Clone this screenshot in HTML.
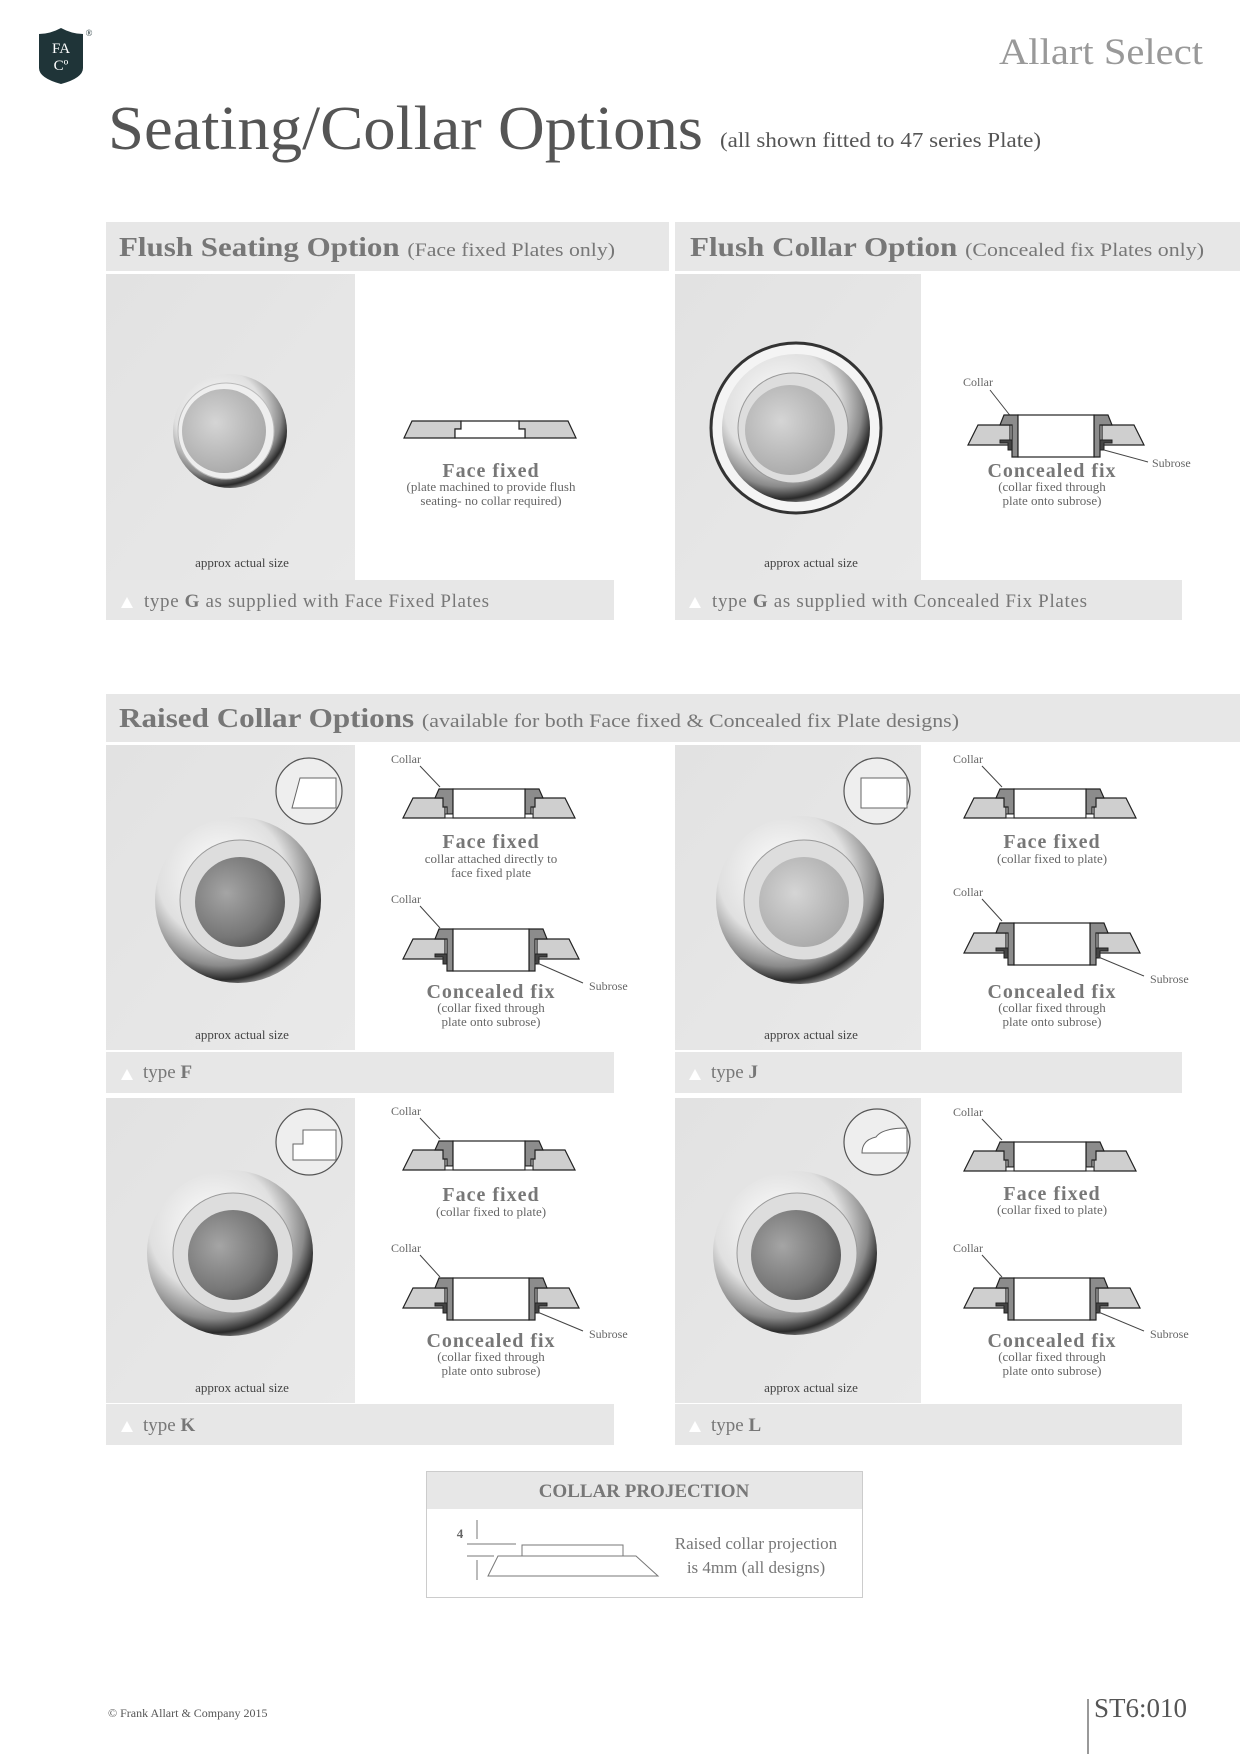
<!DOCTYPE html>
<html><head><meta charset="utf-8"><style>
html,body{margin:0;padding:0;background:#fff;}
svg{display:block;}
text{font-family:"Liberation Serif",serif;}
</style></head><body>
<svg width="1240" height="1754" viewBox="0 0 1240 1754" xmlns="http://www.w3.org/2000/svg">
<defs>
<radialGradient id="met" cx="40%" cy="35%" r="70%">
<stop offset="0" stop-color="#ffffff"/><stop offset="0.55" stop-color="#e0e0e0"/><stop offset="0.78" stop-color="#8a8a8a"/><stop offset="0.9" stop-color="#2a2a2a"/><stop offset="1" stop-color="#bbb"/>
</radialGradient>
<radialGradient id="ball" cx="35%" cy="40%" r="70%">
<stop offset="0" stop-color="#a5a5a5"/><stop offset="0.7" stop-color="#777"/><stop offset="1" stop-color="#555"/>
</radialGradient>
<radialGradient id="ballG" cx="40%" cy="40%" r="70%">
<stop offset="0" stop-color="#d5d5d5"/><stop offset="1" stop-color="#a5a5a5"/>
</radialGradient>
<linearGradient id="bg" x1="0" y1="0" x2="1" y2="1"><stop offset="0" stop-color="#e2e2e2"/><stop offset="1" stop-color="#e9e9e9"/></linearGradient>
<g id="ffL">
<polygon points="0,33 10,13 42,13 42,33" fill="#cfcfcf" stroke="#222" stroke-width="1.2"/>
<polygon points="32,13 36,4 50,4 50,29 44,29 44,22 40,22 40,13" fill="#8c8c8c" stroke="#222" stroke-width="1.2"/>
</g>
<g id="ff">
<use href="#ffL"/>
<use href="#ffL" transform="translate(172,0) scale(-1,1)"/>
<rect x="50" y="4" width="72" height="29" fill="#fff" stroke="#222" stroke-width="1.2"/>
<rect x="42" y="29" width="8" height="4" fill="#fff" stroke="#222" stroke-width="1"/>
<rect x="122" y="29" width="8" height="4" fill="#fff" stroke="#222" stroke-width="1"/>
</g>
<g id="cfL">
<polygon points="0,33 10,13 42,13 42,33" fill="#cfcfcf" stroke="#222" stroke-width="1.2"/>
<polygon points="32,13 36,3 50,3 50,45 44,45 44,13" fill="#8c8c8c" stroke="#222" stroke-width="1.2"/>
<polygon points="32,28 44,28 44,38 40,38 40,31 32,31" fill="#444" stroke="#222" stroke-width="1"/>
</g>
<g id="cf">
<use href="#cfL"/>
<use href="#cfL" transform="translate(176,0) scale(-1,1)"/>
<rect x="50" y="3" width="76" height="42" fill="#fff" stroke="#222" stroke-width="1.2"/>
</g>
<g id="flush">
<polygon points="0,22 8,5 57,5 57,13 51,13 51,22" fill="#cfcfcf" stroke="#222" stroke-width="1.2"/>
<polygon points="172,22 164,5 115,5 115,13 121,13 121,22" fill="#cfcfcf" stroke="#222" stroke-width="1.2"/>
<polygon points="57,5 115,5 115,13 121,13 121,22 51,22 51,13 57,13" fill="#fff" stroke="#222" stroke-width="1.2"/>
</g>
</defs>

<!-- logo -->
<path d="M39,34 Q50,34 61,28 Q72,34 83,34 L83,68 Q83,78 61,84 Q39,78 39,68 Z" fill="#1f3438"/>
<text x="61" y="53" font-size="15" fill="#fff" text-anchor="middle">FA</text>
<text x="61" y="70" font-size="15" fill="#fff" text-anchor="middle">Cº</text>
<text x="89" y="36" font-size="9" fill="#1f3438" text-anchor="middle">®</text>

<text x="999" y="64" font-size="37" fill="#999" textLength="204" lengthAdjust="spacingAndGlyphs">Allart Select</text>
<text x="108" y="149" font-size="62" fill="#555" textLength="595" lengthAdjust="spacingAndGlyphs">Seating/Collar Options</text>
<text x="720" y="147" font-size="21" fill="#555" textLength="321" lengthAdjust="spacingAndGlyphs">(all shown fitted to 47 series Plate)</text>

<!-- header bars -->
<rect x="106" y="222" width="563" height="49" fill="#e7e7e7"/>
<rect x="675" y="222" width="565" height="49" fill="#e7e7e7"/>
<text x="119" y="256" font-size="27" font-weight="bold" fill="#777" textLength="496" lengthAdjust="spacingAndGlyphs">Flush Seating Option <tspan font-size="19" font-weight="normal">(Face fixed Plates only)</tspan></text>
<text x="690" y="256" font-size="27" font-weight="bold" fill="#777" textLength="514" lengthAdjust="spacingAndGlyphs">Flush Collar Option <tspan font-size="19" font-weight="normal">(Concealed fix Plates only)</tspan></text>

<!-- row 1 left -->
<rect x="106" y="274" width="249" height="306" fill="url(#bg)"/>
<circle cx="230" cy="431" r="57" fill="url(#met)"/>
<circle cx="226" cy="431" r="48" fill="#eee" stroke="#bbb"/>
<circle cx="224" cy="431" r="42" fill="url(#ballG)"/>
<text x="242" y="567" font-size="13" fill="#444" text-anchor="middle">approx actual size</text>
<rect x="106" y="580" width="508" height="40" fill="#e7e7e7"/>
<polygon points="121,608 127,597 133,608" fill="#fff"/>
<text x="144" y="607" font-size="19" fill="#777" textLength="345" lengthAdjust="spacing">type <tspan font-weight="bold">G</tspan> as supplied with Face Fixed Plates</text>
<use href="#flush" x="404" y="416"/>
<text x="491" y="477" font-size="20" font-weight="bold" fill="#777" text-anchor="middle" letter-spacing="1">Face fixed</text>
<text x="491" y="491" font-size="13" fill="#666" text-anchor="middle">(plate machined to provide flush</text>
<text x="491" y="505" font-size="13" fill="#666" text-anchor="middle">seating- no collar required)</text>

<!-- row 1 right -->
<rect x="675" y="274" width="246" height="306" fill="url(#bg)"/>
<circle cx="796" cy="428" r="85" fill="#f4f4f4" stroke="#333" stroke-width="3"/>
<circle cx="796" cy="428" r="74" fill="url(#met)"/>
<circle cx="793" cy="428" r="55" fill="#ddd" stroke="#999"/>
<circle cx="790" cy="430" r="45" fill="url(#ballG)"/>
<text x="811" y="567" font-size="13" fill="#444" text-anchor="middle">approx actual size</text>
<rect x="675" y="580" width="507" height="40" fill="#e7e7e7"/>
<polygon points="689,608 695,597 701,608" fill="#fff"/>
<text x="712" y="607" font-size="19" fill="#777" textLength="375" lengthAdjust="spacing">type <tspan font-weight="bold">G</tspan> as supplied with Concealed Fix Plates</text>
<text x="963" y="386" font-size="12" fill="#666">Collar</text>
<line x1="990" y1="390" x2="1012" y2="418" stroke="#444"/>
<use href="#cf" x="968" y="412"/>
<text x="1152" y="467" font-size="12" fill="#666">Subrose</text>
<line x1="1104" y1="450" x2="1148" y2="462" stroke="#444"/>
<text x="1052" y="477" font-size="20" font-weight="bold" fill="#777" text-anchor="middle" letter-spacing="1">Concealed fix</text>
<text x="1052" y="491" font-size="13" fill="#666" text-anchor="middle">(collar fixed through</text>
<text x="1052" y="505" font-size="13" fill="#666" text-anchor="middle">plate onto subrose)</text>

<!-- raised header -->
<rect x="106" y="694" width="1134" height="48" fill="#e7e7e7"/>
<text x="119" y="727" font-size="27" font-weight="bold" fill="#777" textLength="840" lengthAdjust="spacingAndGlyphs">Raised Collar Options <tspan font-size="19" font-weight="normal">(available for both Face fixed &amp; Concealed fix Plate designs)</tspan></text>

<!-- F -->
<g>
<rect x="106" y="745" width="249" height="305" fill="url(#bg)"/>
<circle cx="309" cy="791" r="33" fill="#eee" stroke="#555" stroke-width="1.2"/>
<polygon points="292,808 300,778 336,778 336,808" fill="#fff" stroke="#666"/>
<circle cx="238" cy="900" r="83" fill="url(#met)"/>
<circle cx="240" cy="900" r="60" fill="#ddd" stroke="#999"/>
<circle cx="240" cy="902" r="45" fill="url(#ball)"/>
<text x="242" y="1039" font-size="13" fill="#444" text-anchor="middle">approx actual size</text>
<rect x="106" y="1052" width="508" height="41" fill="#e7e7e7"/>
<polygon points="121,1080 127,1069 133,1080" fill="#fff"/>
<text x="143" y="1078" font-size="19" fill="#777">type <tspan font-weight="bold">F</tspan></text>
</g>
<!-- J -->
<g>
<rect x="675" y="745" width="246" height="305" fill="url(#bg)"/>
<circle cx="877" cy="791" r="33" fill="#eee" stroke="#555" stroke-width="1.2"/>
<rect x="861" y="778" width="46" height="30" fill="#fff" stroke="#666"/>
<circle cx="800" cy="900" r="84" fill="url(#met)"/>
<circle cx="804" cy="900" r="60" fill="#ddd" stroke="#999"/>
<circle cx="804" cy="902" r="45" fill="url(#ballG)"/>
<text x="811" y="1039" font-size="13" fill="#444" text-anchor="middle">approx actual size</text>
<rect x="675" y="1052" width="507" height="41" fill="#e7e7e7"/>
<polygon points="689,1080 695,1069 701,1080" fill="#fff"/>
<text x="711" y="1078" font-size="19" fill="#777">type <tspan font-weight="bold">J</tspan></text>
</g>
<!-- K -->
<g>
<rect x="106" y="1098" width="249" height="305" fill="url(#bg)"/>
<circle cx="309" cy="1142" r="33" fill="#eee" stroke="#555" stroke-width="1.2"/>
<polygon points="293,1160 293,1144 303,1144 303,1130 336,1130 336,1160" fill="#fff" stroke="#666"/>
<circle cx="230" cy="1253" r="83" fill="url(#met)"/>
<circle cx="233" cy="1253" r="60" fill="#ddd" stroke="#999"/>
<circle cx="233" cy="1255" r="45" fill="url(#ball)"/>
<text x="242" y="1392" font-size="13" fill="#444" text-anchor="middle">approx actual size</text>
<rect x="106" y="1404" width="508" height="41" fill="#e7e7e7"/>
<polygon points="121,1432 127,1421 133,1432" fill="#fff"/>
<text x="143" y="1431" font-size="19" fill="#777">type <tspan font-weight="bold">K</tspan></text>
</g>
<!-- L -->
<g>
<rect x="675" y="1098" width="246" height="305" fill="url(#bg)"/>
<circle cx="877" cy="1142" r="33" fill="#eee" stroke="#555" stroke-width="1.2"/>
<path d="M862,1153 Q862,1140 876,1137 Q882,1128 907,1128 L907,1153 Z" fill="#fff" stroke="#666"/>
<circle cx="795" cy="1253" r="82" fill="url(#met)"/>
<circle cx="797" cy="1253" r="60" fill="#ddd" stroke="#999"/>
<circle cx="796" cy="1255" r="45" fill="url(#ball)"/>
<text x="811" y="1392" font-size="13" fill="#444" text-anchor="middle">approx actual size</text>
<rect x="675" y="1404" width="507" height="41" fill="#e7e7e7"/>
<polygon points="689,1432 695,1421 701,1432" fill="#fff"/>
<text x="711" y="1431" font-size="19" fill="#777">type <tspan font-weight="bold">L</tspan></text>
</g>

<!-- F diagrams -->
<text x="391" y="763" font-size="12" fill="#666">Collar</text>
<line x1="420" y1="766" x2="440" y2="787" stroke="#444"/>
<use href="#ff" x="403" y="785"/>
<text x="491" y="848" font-size="20" font-weight="bold" fill="#777" text-anchor="middle" letter-spacing="1">Face fixed</text>
<text x="491" y="863" font-size="13" fill="#666" text-anchor="middle">collar attached directly to</text>
<text x="491" y="877" font-size="13" fill="#666" text-anchor="middle">face fixed plate</text>
<text x="391" y="903" font-size="12" fill="#666">Collar</text>
<line x1="420" y1="906" x2="440" y2="928" stroke="#444"/>
<use href="#cf" x="403" y="926"/>
<line x1="535" y1="962" x2="583" y2="983" stroke="#444"/>
<text x="589" y="990" font-size="12" fill="#666">Subrose</text>
<text x="491" y="998" font-size="20" font-weight="bold" fill="#777" text-anchor="middle" letter-spacing="1">Concealed fix</text>
<text x="491" y="1012" font-size="13" fill="#666" text-anchor="middle">(collar fixed through</text>
<text x="491" y="1026" font-size="13" fill="#666" text-anchor="middle">plate onto subrose)</text>

<!-- J diagrams -->
<text x="953" y="763" font-size="12" fill="#666">Collar</text>
<line x1="982" y1="766" x2="1002" y2="787" stroke="#444"/>
<use href="#ff" x="964" y="785"/>
<text x="1052" y="848" font-size="20" font-weight="bold" fill="#777" text-anchor="middle" letter-spacing="1">Face fixed</text>
<text x="1052" y="863" font-size="13" fill="#666" text-anchor="middle">(collar fixed to plate)</text>
<text x="953" y="896" font-size="12" fill="#666">Collar</text>
<line x1="982" y1="899" x2="1002" y2="921" stroke="#444"/>
<use href="#cf" x="964" y="920"/>
<line x1="1096" y1="956" x2="1144" y2="976" stroke="#444"/>
<text x="1150" y="983" font-size="12" fill="#666">Subrose</text>
<text x="1052" y="998" font-size="20" font-weight="bold" fill="#777" text-anchor="middle" letter-spacing="1">Concealed fix</text>
<text x="1052" y="1012" font-size="13" fill="#666" text-anchor="middle">(collar fixed through</text>
<text x="1052" y="1026" font-size="13" fill="#666" text-anchor="middle">plate onto subrose)</text>

<!-- K diagrams -->
<text x="391" y="1115" font-size="12" fill="#666">Collar</text>
<line x1="420" y1="1118" x2="440" y2="1139" stroke="#444"/>
<use href="#ff" x="403" y="1137"/>
<text x="491" y="1201" font-size="20" font-weight="bold" fill="#777" text-anchor="middle" letter-spacing="1">Face fixed</text>
<text x="491" y="1216" font-size="13" fill="#666" text-anchor="middle">(collar fixed to plate)</text>
<text x="391" y="1252" font-size="12" fill="#666">Collar</text>
<line x1="420" y1="1255" x2="440" y2="1277" stroke="#444"/>
<use href="#cf" x="403" y="1275"/>
<line x1="535" y1="1311" x2="583" y2="1331" stroke="#444"/>
<text x="589" y="1338" font-size="12" fill="#666">Subrose</text>
<text x="491" y="1347" font-size="20" font-weight="bold" fill="#777" text-anchor="middle" letter-spacing="1">Concealed fix</text>
<text x="491" y="1361" font-size="13" fill="#666" text-anchor="middle">(collar fixed through</text>
<text x="491" y="1375" font-size="13" fill="#666" text-anchor="middle">plate onto subrose)</text>

<!-- L diagrams -->
<text x="953" y="1116" font-size="12" fill="#666">Collar</text>
<line x1="982" y1="1119" x2="1002" y2="1140" stroke="#444"/>
<use href="#ff" x="964" y="1138"/>
<text x="1052" y="1200" font-size="20" font-weight="bold" fill="#777" text-anchor="middle" letter-spacing="1">Face fixed</text>
<text x="1052" y="1214" font-size="13" fill="#666" text-anchor="middle">(collar fixed to plate)</text>
<text x="953" y="1252" font-size="12" fill="#666">Collar</text>
<line x1="982" y1="1255" x2="1002" y2="1277" stroke="#444"/>
<use href="#cf" x="964" y="1275"/>
<line x1="1096" y1="1311" x2="1144" y2="1331" stroke="#444"/>
<text x="1150" y="1338" font-size="12" fill="#666">Subrose</text>
<text x="1052" y="1347" font-size="20" font-weight="bold" fill="#777" text-anchor="middle" letter-spacing="1">Concealed fix</text>
<text x="1052" y="1361" font-size="13" fill="#666" text-anchor="middle">(collar fixed through</text>
<text x="1052" y="1375" font-size="13" fill="#666" text-anchor="middle">plate onto subrose)</text>

<!-- collar projection -->
<rect x="426.5" y="1471.5" width="436" height="126" fill="#fff" stroke="#ccc"/>
<rect x="427" y="1472" width="435" height="37" fill="#e7e7e7"/>
<text x="644" y="1497" font-size="19" font-weight="bold" fill="#777" text-anchor="middle">COLLAR PROJECTION</text>
<text x="460" y="1538" font-size="13" font-weight="bold" fill="#666" text-anchor="middle">4</text>
<line x1="477" y1="1520" x2="477" y2="1539" stroke="#777"/>
<line x1="467" y1="1544" x2="516" y2="1544" stroke="#777"/>
<line x1="467" y1="1556" x2="494" y2="1556" stroke="#777"/>
<line x1="477" y1="1560" x2="477" y2="1580" stroke="#777"/>
<polyline points="522,1556 522,1545 623,1545 623,1556" fill="none" stroke="#777"/>
<polygon points="498,1556 636,1556 658,1576 488,1576" fill="none" stroke="#777"/>
<text x="756" y="1549" font-size="17" fill="#777" text-anchor="middle">Raised collar projection</text>
<text x="756" y="1573" font-size="17" fill="#777" text-anchor="middle">is 4mm (all designs)</text>

<!-- footer -->
<text x="108" y="1717" font-size="12" fill="#555" font-family="Liberation Sans, sans-serif">© Frank Allart &amp; Company 2015</text>
<line x1="1088" y1="1699" x2="1088" y2="1754" stroke="#555" stroke-width="1.2"/>
<text x="1094" y="1717" font-size="27" fill="#555">ST6:010</text>
</svg>
</body></html>
